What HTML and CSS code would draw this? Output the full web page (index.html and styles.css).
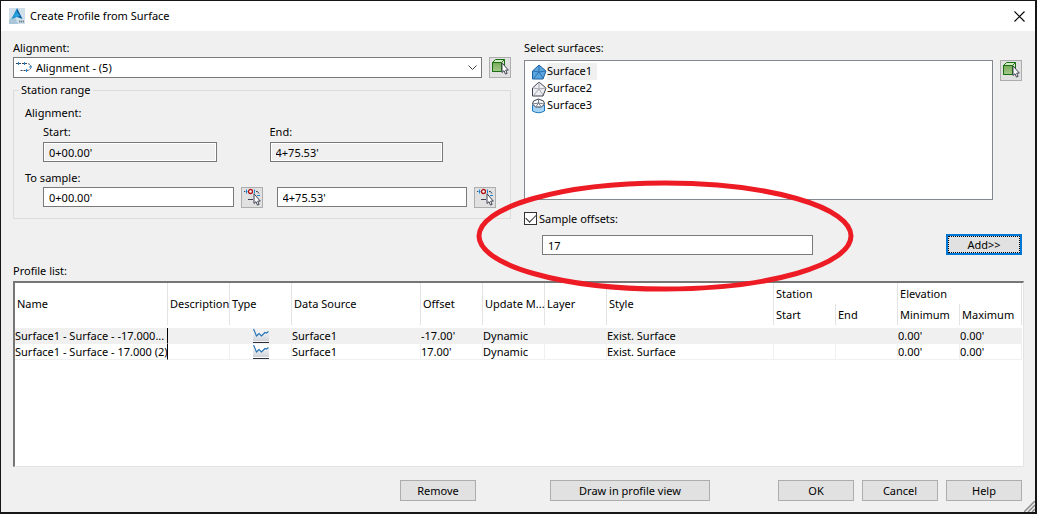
FILE: index.html
```html
<!DOCTYPE html>
<html lang="en">

<head>
    <meta charset="UTF-8">
    <meta name="viewport" content="width=device-width, initial-scale=1.0">
    <title>Create Profile from Surface</title>
    <link rel="stylesheet" href="styles.css">
</head>

<body>
    <!-- shared icons -->
    <svg class="sprite" aria-hidden="true">
        <defs>
            <linearGradient id="green" x1="0" y1="0" x2="0" y2="1">
                <stop offset="0" stop-color="#78ab58" />
                <stop offset="1" stop-color="#a5c98c" />
            </linearGradient>
            <linearGradient id="fade" x1="0" y1="0" x2="0" y2="1">
                <stop offset="0" stop-color="#fff" />
                <stop offset="1" stop-color="#cfd2da" />
            </linearGradient>
        </defs>
        <symbol id="cursor" viewBox="0 0 8 13">
            <path d="M1 .8v9.700l2-1.800 1.500 3.400 1.600-.7-1.400-3.300h2.600z" fill="#fff" stroke="#3c4250" stroke-width="1" />
        </symbol>
        <symbol id="pick-object" viewBox="0 0 20 19">
            <path d="M2.500 4.500l3-3h9v9l-3 3h-9z" fill="#d5ebc6" stroke="#197012" />
            <path d="M2.500 4.500h9v9h-9z" fill="url(#green)" stroke="#197012" />
            <path d="M11.500 4.500l3-3" stroke="#197012" />
            <use href="#cursor" x="11" y="4" width="8" height="13" />
        </symbol>
        <symbol id="pick-station" viewBox="0 0 20 19">
            <path d="M2 3.500h1M14 3.500h1.500l1.500 2M6 11.500h5" stroke="#3c4250" fill="none" />
            <path d="M4.500 1.500v4M3.500 3.500h2M12.500 1.500v4M15 7.500h3" stroke="#1e86d6" fill="none" />
            <circle cx="8.500" cy="3.500" r="2" fill="#fff" stroke="#b01414" stroke-width="1.300" />
            <use href="#cursor" x="11" y="5" width="8" height="13" />
        </symbol>
        <symbol id="profile" viewBox="0 0 16 15">
            <path d="M0 1l3.500 7 2-2L8 8l4-3.500L16 4v9H0z" fill="url(#fade)" />
            <path d="M.5 1l3 7 2.500-2.500L8.500 8l3.500-3.500 1.500.5 2-1.500" fill="none" stroke="#2474b8" stroke-width="1.200" />
            <path d="M0 14.500h16" stroke="#2b303b" />
        </symbol>
    </svg>

    <div class="dialog">
        <header class="titlebar">
            <svg class="app-icon" width="16" height="16" viewBox="0 0 16 16">
                <path d="M0 0h16v16H0z" fill="#cfe0ea" />
                <path d="M0 12l5-5 4 9H0z" fill="#a9c7d8" />
                <path d="M8 0L2.500 11 8 9z" fill="#1b8fd0" />
                <path d="M8 0l5.500 11L8 9z" fill="#0b5d9e" />
                <path d="M5 8l3-4 3 4-3 1z" fill="#27a3df" />
                <path d="M10 13.500h5" stroke="#77838b" stroke-width="2" stroke-dasharray="1.300 .6" />
            </svg>
            <h1>Create Profile from Surface</h1>
            <button class="close" type="button" aria-label="Close">
                <svg width="11" height="11" viewBox="0 0 11 11">
                    <path d="M.5.5l10 10M10.500.5l-10 10" stroke="#000" stroke-width="1.100" />
                </svg>
            </button>
        </header>

        <main>
            <div class="columns">
                <section class="source">
                    <label for="alignment">Alignment:</label>
                    <div class="row">
                        <div class="combo">
                            <svg class="combo-icon" width="16" height="12" viewBox="0 0 16 12">
                                <path d="M0 2.500h11q4 .5 4 3.500t-4 3.500H4" fill="none" stroke="#3c4250" stroke-dasharray="2 1" />
                                <path d="M2.500 1v3M8.500 1v3M10.500 8v3M13 6h3" stroke="#1e86d6" />
                            </svg>
                            <select id="alignment">
                                <option>Alignment - (5)</option>
                            </select>
                            <svg class="combo-arrow" width="9" height="5" viewBox="0 0 9 5">
                                <path d="M.5.500l4 4 4-4" fill="none" stroke="#444" />
                            </svg>
                        </div>
                        <button class="pick" type="button" aria-label="Pick alignment">
                            <svg width="20" height="19"><use href="#pick-object" /></svg>
                        </button>
                    </div>

                    <fieldset>
                        <legend>Station range</legend>
                        <p>Alignment:</p>
                        <div class="range">
                            <div class="field">
                                <label for="start">Start:</label>
                                <input id="start" type="text" value="0+00.00'" readonly>
                            </div>
                            <div class="field">
                                <label for="end">End:</label>
                                <input id="end" type="text" value="4+75.53'" readonly>
                            </div>
                        </div>
                        <p class="to-sample">To sample:</p>
                        <div class="sample">
                            <div class="row">
                                <input type="text" value="0+00.00'" aria-label="Sample start">
                                <button class="pick" type="button" aria-label="Pick start station">
                                    <svg width="20" height="19"><use href="#pick-station" /></svg>
                                </button>
                            </div>
                            <div class="row">
                                <input type="text" value="4+75.53'" aria-label="Sample end">
                                <button class="pick" type="button" aria-label="Pick end station">
                                    <svg width="20" height="19"><use href="#pick-station" /></svg>
                                </button>
                            </div>
                        </div>
                    </fieldset>
                </section>

                <section class="surfaces">
                    <p id="surfaces-label">Select surfaces:</p>
                    <div class="row">
                        <ul class="listbox" role="listbox" aria-labelledby="surfaces-label">
                            <li role="option" aria-selected="true">
                                <svg width="16" height="16" viewBox="0 0 16 16">
                                    <path d="M8 1l7 6-3 8H1.500V7z" fill="#5ba6e0" stroke="#1e5f9c" />
                                    <path d="M8 1v7M2 7l6 1 7-1M8 8l-5 6M8 8l4 6" stroke="#2c71ad" fill="none" />
                                </svg>
                                <span>Surface1</span>
                            </li>
                            <li role="option" aria-selected="false">
                                <svg width="16" height="16" viewBox="0 0 16 16">
                                    <path d="M8 1l7 6-3 8H1.500V7z" fill="#eeeef2" stroke="#3c4250" />
                                    <path d="M8 1v7M2 7l6 1 7-1M8 8l-5 6M8 8l4 6" stroke="#a3a6ae" fill="none" />
                                </svg>
                                <span>Surface2</span>
                            </li>
                            <li role="option" aria-selected="false">
                                <svg width="16" height="16" viewBox="0 0 16 16">
                                    <path d="M1.500 7v6q6 3.500 12 0V7z" fill="#a4d3f3" stroke="#1e78bf" />
                                    <path d="M7.500 1l-5 2-1 3 3 3h6l3-3-1-3z" fill="#fff" stroke="#3c4250" />
                                    <path d="M7.500 1v4M2 6l5.500-1L13 6M7.500 5L5 8.500M7.500 5L10 8.500" stroke="#74798a" fill="none" />
                                </svg>
                                <span>Surface3</span>
                            </li>
                        </ul>
                        <button class="pick" type="button" aria-label="Pick surface">
                            <svg width="20" height="19"><use href="#pick-object" /></svg>
                        </button>
                    </div>

                    <div class="offsets">
                        <label class="check"><input type="checkbox" checked>Sample offsets:</label>
                        <div class="offset-row">
                            <input type="text" value="17" aria-label="Sample offsets">
                            <button class="btn add" type="button">Add&gt;&gt;</button>
                        </div>
                        <!-- red markup ring around the offsets -->
                        <svg class="ring" width="378" height="112" viewBox="0 0 378 112" aria-hidden="true">
                            <ellipse cx="189" cy="56" rx="186" ry="53" fill="none" stroke="#ed1c24" stroke-width="5" />
                        </svg>
                    </div>
                </section>
            </div>

            <p class="list-label">Profile list:</p>
            <div class="profile-list">
                <table>
                    <colgroup>
                        <col class="name"><col><col><col class="source-col"><col><col><col><col class="style"><col><col><col><col>
                    </colgroup>
                    <thead>
                        <tr>
                            <th rowspan="2">Name</th>
                            <th rowspan="2">Description</th>
                            <th rowspan="2">Type</th>
                            <th rowspan="2">Data Source</th>
                            <th rowspan="2">Offset</th>
                            <th rowspan="2">Update M...</th>
                            <th rowspan="2">Layer</th>
                            <th rowspan="2">Style</th>
                            <th colspan="2">Station</th>
                            <th colspan="2">Elevation</th>
                        </tr>
                        <tr>
                            <th>Start</th>
                            <th>End</th>
                            <th>Minimum</th>
                            <th>Maximum</th>
                        </tr>
                    </thead>
                    <tbody>
                        <tr class="selected">
                            <td>Surface1 - Surface - -17.000...</td>
                            <td></td>
                            <td class="type"><svg width="16" height="15"><use href="#profile" /></svg></td>
                            <td>Surface1</td>
                            <td>-17.00'</td>
                            <td>Dynamic</td>
                            <td></td>
                            <td>Exist. Surface</td>
                            <td></td>
                            <td></td>
                            <td>0.00'</td>
                            <td>0.00'</td>
                        </tr>
                        <tr>
                            <td>Surface1 - Surface - 17.000 (2)</td>
                            <td></td>
                            <td class="type"><svg width="16" height="15"><use href="#profile" /></svg></td>
                            <td>Surface1</td>
                            <td>17.00'</td>
                            <td>Dynamic</td>
                            <td></td>
                            <td>Exist. Surface</td>
                            <td></td>
                            <td></td>
                            <td>0.00'</td>
                            <td>0.00'</td>
                        </tr>
                    </tbody>
                </table>
            </div>

            <footer>
                <button class="btn remove" type="button">Remove</button>
                <button class="btn draw" type="button">Draw in profile view</button>
                <button class="btn" type="button">OK</button>
                <button class="btn" type="button">Cancel</button>
                <button class="btn" type="button">Help</button>
            </footer>
        </main>

        <svg class="grip" width="11" height="11" viewBox="0 0 11 11" aria-hidden="true">
            <path d="M0 11L11 0M4 11l7-7M8 11l3-3" stroke="#8c8c8c" stroke-width="1.500" />
        </svg>
    </div>
</body>

</html>
```

FILE: styles.css
```css
* {
    box-sizing: border-box;
    margin: 0;
    padding: 0;
}

body {
    display: flex;
    min-height: 100vh;
    padding: 1px 2px 2px 1px;
    background-color: #171517;
    color: #000;
    font: 11px/14px "Noto Sans", Tahoma, sans-serif;
}

button,
input,
select {
    color: inherit;
    font: inherit;
}

.sprite {
    position: absolute;
    width: 0;
    height: 0;
}

.dialog {
    position: relative;
    display: flex;
    flex: 1;
    flex-direction: column;
    min-width: 0;
    background-color: #f0f0f0;
}

/* title bar */
.titlebar {
    display: flex;
    align-items: center;
    height: 30px;
    padding: 0 10px 0 8px;
    background-color: #fff;
}

.titlebar h1 {
    flex: 1;
    margin-left: 5px;
    font-size: 11px;
    font-weight: normal;
}

.close {
    display: flex;
    border: 0;
    background: none;
}

main {
    display: flex;
    flex: 1;
    flex-direction: column;
    padding: 10px 13px 11px 12px;
}

.columns {
    display: grid;
    grid-template-columns: 1fr 1fr;
    gap: 13px;
}

.row {
    display: flex;
    gap: 7px;
    align-items: flex-start;
}

label {
    display: block;
}

input[type="text"] {
    display: block;
    width: 100%;
    min-width: 0;
    height: 20px;
    padding: 0 5px;
    border: 1px solid #7a7a7a;
    border-radius: 0;
    background-color: #fff;
}

input[readonly] {
    background-color: #f0f0f0;
    box-shadow: inset 0 0 0 1px #fff;
}

.pick {
    flex: none;
    width: 22px;
    height: 21px;
    border: 1px solid #adadad;
    background-color: #e1e1e1;
}

.pick svg {
    display: block;
}

/* alignment drop-down */
.combo {
    position: relative;
    flex: 1;
    margin-top: 2px;
}

.combo + .pick {
    margin-top: 2px;
}

.combo select {
    display: block;
    width: 100%;
    height: 21px;
    padding: 0 22px;
    border: 1px solid #7a7a7a;
    border-radius: 0;
    background-color: #fff;
    appearance: none;
}

.combo-icon,
.combo-arrow {
    position: absolute;
    pointer-events: none;
}

.combo-icon {
    top: 4px;
    left: 3px;
}

.combo-arrow {
    top: 8px;
    right: 5px;
}

/* station range */
fieldset {
    min-width: 0;
    margin-top: 5px;
    padding: 9px 14px 10px 11px;
    border: 1px solid #dcdcdc;
}

legend {
    margin-left: -6px;
    padding: 0 2px;
}

.range,
.sample {
    display: grid;
    grid-template-columns: 1fr 1fr;
    padding-left: 18px;
}

.range {
    margin-top: 5px;
}

.field {
    padding-right: 53px;
}

.field input {
    margin-top: 3px;
}

.to-sample {
    margin: 9px 0 2px;
}

.sample {
    gap: 14px;
}

/* surfaces */
.listbox {
    flex: 1;
    height: 140px;
    margin-top: 5px;
    padding: 2px 6px;
    border: 1px solid #828790;
    background-color: #fff;
    list-style: none;
}

.listbox + .pick {
    margin-top: 5px;
}

.listbox li {
    display: flex;
    align-items: center;
    height: 17px;
}

.listbox span {
    padding: 1px 5px 2px 0;
}

.listbox [aria-selected="true"] span {
    background-color: #f0f0f0;
}

.offsets {
    position: relative;
    margin-top: 12px;
}

.check {
    display: flex;
    gap: 2px;
    align-items: center;
    height: 13px;
}

.check input {
    width: 13px;
    height: 13px;
    border: 1px solid #333;
    background: #fff;
    appearance: none;
}

.check input:checked::before {
    content: "";
    display: block;
    width: 9px;
    height: 5px;
    margin: 1px;
    border: solid #333;
    border-width: 0 0 1px 1px;
    transform: rotate(-45deg);
}

.offset-row {
    display: flex;
    align-items: flex-end;
    justify-content: space-between;
    margin-top: 9px;
    padding-left: 18px;
}

.offset-row input[type="text"] {
    width: 271px;
}

.ring {
    position: absolute;
    top: -32px;
    left: -48px;
    z-index: 1;
    pointer-events: none;
}

.btn {
    min-width: 76px;
    height: 21px;
    border: 1px solid #adadad;
    background-color: #e1e1e1;
}

.add {
    border: 2px solid #0078d7;
    outline: 1px dotted #000;
    outline-offset: -3px;
}

/* profile list */
.list-label {
    margin-top: 9px;
}

.profile-list {
    flex: 1;
    margin: 3px -2px 0 0;
    border: 2px solid #767676;
    border-right: 1px solid #e3e3e3;
    border-bottom: 1px solid #e3e3e3;
    background-color: #fff;
    padding-right: 1px;
}

table {
    width: 100%;
    border-collapse: separate;
    border-spacing: 0;
    table-layout: fixed;
}

col {
    width: 62px;
}

.name {
    width: 153px;
}

.source-col {
    width: 129px;
}

.style {
    width: 167px;
}

th,
td {
    text-align: left;
    white-space: nowrap;
}

th {
    height: 21px;
    padding-left: 2px;
    border-right: 1px solid #e3e3e3;
    font-weight: normal;
}

tbody::before {
    content: "";
    display: block;
    height: 3px;
}

td {
    height: 16px;
    border-right: 1px solid #f0f0f0;
    border-bottom: 1px solid #f0f0f0;
}

td:first-child {
    border-right-color: #000;
}

.selected td {
    background-color: #f0f0f0;
}

.type svg {
    display: block;
    margin: 0 auto;
}

/* bottom buttons */
footer {
    display: flex;
    gap: 8px;
    justify-content: flex-end;
    margin-top: 13px;
}

.remove {
    margin-right: 66px;
}

.draw {
    min-width: 160px;
    margin-right: 60px;
}

.grip {
    position: absolute;
    right: 0;
    bottom: 0;
}
```
